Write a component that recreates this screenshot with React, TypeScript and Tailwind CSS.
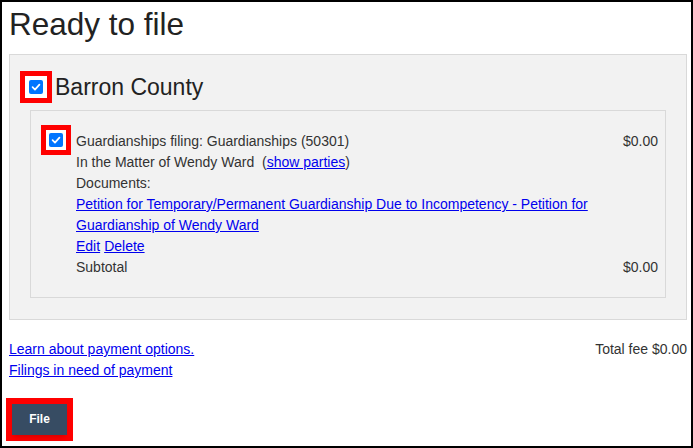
import React from "react";

function Check({ pad }: { pad: string }) {
  return (
    <div className={`shrink-0 border-[5px] border-[#ff0000] bg-white ${pad}`}>
      <span className="flex h-[14px] w-[14px] items-center justify-center rounded-[2px] bg-[#0075ff]">
        <svg viewBox="0 0 14 14" className="h-[12px] w-[12px]">
          <path
            d="M3 7.2 L5.8 10 L11 4.2"
            fill="none"
            stroke="white"
            strokeWidth="2"
            strokeLinecap="round"
            strokeLinejoin="round"
          />
        </svg>
      </span>
    </div>
  );
}

export default function App() {
  return (
    <div className="box-border h-[448px] w-[693px] overflow-hidden border-2 border-black bg-white pl-[7px] pr-[4px] font-['Liberation_Sans',Arial,sans-serif] text-[14px] leading-[21px] text-[#333]">
      {/* Heading */}
      <h1 className="mt-[3px] mb-[11px] text-[31.5px] leading-[38px] font-normal text-[#222]">
        Ready to file
      </h1>

      {/* County panel */}
      <div className="border border-[#d9d9d9] bg-[#f2f2f2] pt-[16px] pr-[20px] pb-[21px] pl-[10px]">
        <div className="flex items-center gap-[3px]">
          <Check pad="p-[4px]" />
          <span className="text-[23px] leading-[28px] text-[#222]">Barron County</span>
        </div>

        {/* Filing */}
        <div className="mt-[7px] ml-[10px] border border-[#d9d9d9] bg-[#f2f2f2] pt-[14px] pr-[7px] pb-[19px] pl-[10px]">
          <div className="flex items-start gap-[5px]">
            <Check pad="px-[3px] py-[3px]" />
            <div className="mt-[6px] flex flex-1 flex-col">
              <div className="flex justify-between">
                <span>Guardianships filing: Guardianships (50301)</span>
                <span>$0.00</span>
              </div>
              <div>
                In the Matter of Wendy Ward&nbsp; (
                <a href="#" className="text-[#0000ee] underline">show parties</a>)
              </div>
              <div>Documents:</div>
              <div>
                <a href="#" className="text-[#0000ee] underline">
                  Petition for Temporary/Permanent Guardianship Due to Incompetency - Petition for Guardianship of Wendy Ward
                </a>
              </div>
              <div className="flex gap-[4px]">
                <a href="#" className="text-[#0000ee] underline">Edit</a>
                <a href="#" className="text-[#0000ee] underline">Delete</a>
              </div>
              <div className="flex justify-between">
                <span>Subtotal</span>
                <span>$0.00</span>
              </div>
            </div>
          </div>
        </div>
      </div>

      {/* Payment links */}
      <div className="mt-[19px] flex items-start justify-between">
        <div className="flex flex-col">
          <a href="#" className="text-[#0000ee] underline">Learn about payment options.</a>
          <a href="#" className="text-[#0000ee] underline">Filings in need of payment</a>
        </div>
        <span>Total fee $0.00</span>
      </div>

      {/* Submit */}
      <div className="mt-[17px] ml-[-3px] w-fit border-[6px] border-[#ff0000]">
        <button className="flex h-[31px] w-[55px] items-center justify-center bg-[#374c63] text-[12px] font-bold text-white shadow-md">
          File
        </button>
      </div>
    </div>
  );
}
